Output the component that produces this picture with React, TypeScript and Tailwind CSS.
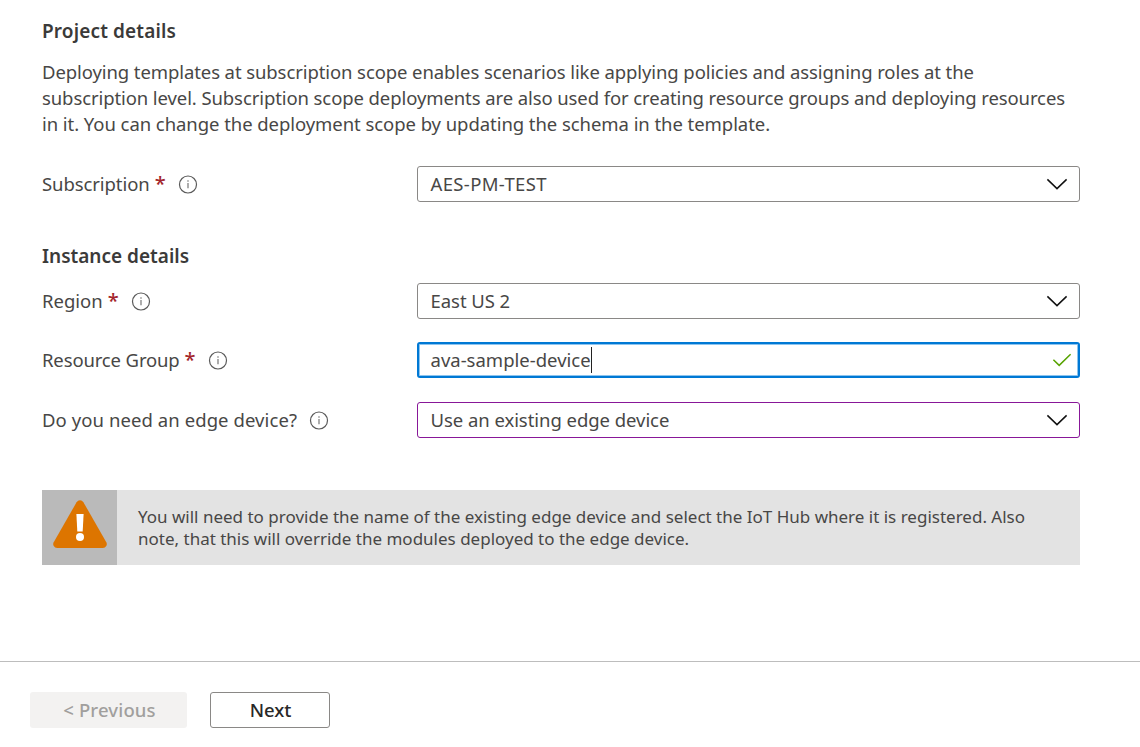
import type { ReactNode } from "react";

function Info() {
  return (
    <svg width="20" height="20" viewBox="0 0 20 20" fill="none" className="shrink-0">
      <circle cx="10" cy="10.5" r="8.5" stroke="#5a5a5a" strokeWidth="1.2" />
      <path d="M10 9v5.2M10 6.3v1.5" stroke="#8a8a8a" strokeWidth="1.4" />
    </svg>
  );
}

function Chevron() {
  return (
    <svg width="22" height="14" viewBox="0 0 22 14" fill="none">
      <path d="M1.4 2.4 11 11.6 20.6 2.4" stroke="#111" strokeWidth="1.5" />
    </svg>
  );
}

function Check() {
  return (
    <svg width="20" height="16" viewBox="0 0 20 16" fill="none">
      <path d="M1.4 7.7 7.2 13.4 18.6 2.2" stroke="#57a300" strokeWidth="1.5" />
    </svg>
  );
}

function Warning() {
  return (
    <svg width="56" height="50" viewBox="0 0 56 50" className="mt-[9px] ml-[10px]">
      <path d="M24.6 3.2a4 4 0 0 1 6.8 0L54.3 43.2a3.9 3.9 0 0 1-3.4 5.8H5.1a3.9 3.9 0 0 1-3.4-5.8Z" fill="#dd7500" />
      <path d="M24.4 15h7.2l-.9 17.5h-5.4Z" fill="#fff" />
      <circle cx="28" cy="38" r="4" fill="#fff" />
    </svg>
  );
}

type RowProps = { label: ReactNode; required?: boolean; children: ReactNode; className: string };

function Row({ label, required, children, className }: RowProps) {
  return (
    <div className={`flex h-9 items-center ${className}`}>
      <div className="flex w-[375px] shrink-0 items-center">
        {label}
        {required && <span className="ml-[5px] w-[11px] text-[20px] leading-[26px] font-medium text-[#a4262c]">*</span>}
        <span className="ml-3"><Info /></span>
      </div>
      {children}
    </div>
  );
}

const box = "flex h-9 flex-1 items-center justify-between rounded-[3px]";
const select = `${box} border pr-[11px] pl-[12.5px]`;

export default function App() {
  return (
    <div className="flex h-[747px] w-[1140px] flex-col overflow-hidden bg-white font-['Noto_Sans',sans-serif] text-[18.5px] text-[#484746]">
      <main className="h-[661px] pr-[60px] pl-[42px]">
        <h2 className="mt-[18px] h-[26px] text-[19px] leading-[26px] font-semibold tracking-[0.14px] text-[#3b3a39]">Project details</h2>
        <p className="mt-[15px] leading-[26px] whitespace-nowrap">
          <span className="tracking-[-0.092px]">Deploying templates at subscription scope enables scenarios like applying policies and assigning roles at the</span>
          <br />
          <span className="tracking-[-0.094px]">subscription level. Subscription scope deployments are also used for creating resource groups and deploying resources</span>
          <br />
          <span className="tracking-[-0.06px]">in it. You can change the deployment scope by updating the schema in the template.</span>
        </p>
        <Row className="mt-[29px]" required label={<span className="tracking-[-0.08px]">Subscription</span>}>
          <div className={`${select} border-[#8a8886]`}>
            <span className="tracking-[0.36px]">AES-PM-TEST</span>
            <Chevron />
          </div>
        </Row>
        <h2 className="mt-[41px] h-[26px] text-[19px] leading-[26px] font-semibold text-[#3b3a39]">Instance details</h2>
        <Row className="mt-[14px]" required label={<span>Region</span>}>
          <div className={`${select} border-[#8a8886]`}>
            <span className="tracking-[-0.05px]">East US 2</span>
            <Chevron />
          </div>
        </Row>
        <Row className="mt-[23px]" required label={<span className="tracking-[-0.14px]">Resource Group</span>}>
          <div className={`${box} border-2 border-[#0078d4] pr-[6px] pl-[11.5px] shadow-[inset_0_0_0_1px_#8cc4ef]`}>
            <span className="flex items-center">
              ava-sample-device
              <span className="h-[26px] w-px bg-[#222]" />
            </span>
            <Check />
          </div>
        </Row>
        <Row className="mt-[24px]" label={<span className="tracking-[0.08px]">Do you need an edge device?</span>}>
          <div className={`${select} border-[#881798]`}>
            <span className="tracking-[-0.05px]">Use an existing edge device</span>
            <Chevron />
          </div>
        </Row>
        <div className="mt-[52px] flex h-[75px] bg-[#e3e3e3]">
          <div className="w-[75px] bg-[#bababa]">
            <Warning />
          </div>
          <p className="pt-4 pl-[21px] text-[17px] leading-[22px] whitespace-nowrap">
            You will need to provide the name of the existing edge device and select the IoT Hub where it is registered. Also
            <br />
            note, that this will override the modules deployed to the edge device.
          </p>
        </div>
      </main>
      <footer className="flex flex-1 gap-[23px] border-t border-[#bdbdbd] pt-[30px] pl-[30px] font-medium">
        <button className="h-9 w-[157px] rounded-[3px] bg-[#f3f2f1] pl-[2px] tracking-[0.15px] text-[#a19f9d]">&lt; Previous</button>
        <button className="h-9 w-[120px] rounded-[3px] border border-[#8a8886] pl-px text-[#292827]">Next</button>
      </footer>
    </div>
  );
}
